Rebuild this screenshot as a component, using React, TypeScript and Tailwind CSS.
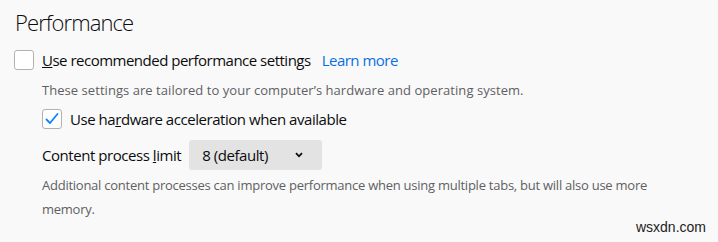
import React from "react";

function Check({ checked }: { checked?: boolean }) {
  return (
    <div className="w-5 h-5 shrink-0 rounded-[3px] border border-[#b1b1b3] bg-white flex items-center justify-center">
      {checked && (
        <svg width="16" height="16" viewBox="0 0 16 16">
          <path d="M2.5 8.5 L6 12 L13.5 3" fill="none" stroke="#0a84ff" strokeWidth="1.8" strokeLinecap="round" strokeLinejoin="round" />
        </svg>
      )}
    </div>
  );
}

export default function App() {
  return (
    <div className="relative w-[718px] h-[242px] bg-[#f9f9fa] text-[#0c0c0d] overflow-hidden" style={{ fontFamily: '"Open Sans", "Noto Sans", sans-serif' }}>
      <div className="pl-[15px] pt-[7px]">
        <h1 className="text-[22px] leading-[30px] font-light tracking-[-0.9px]">Performance</h1>
      </div>
      <div className="pl-[14px] mt-[13px] flex items-center gap-2 h-[20px]">
        <Check />
        <span className="text-[15px] tracking-[-0.5px]"><span className="underline">U</span>se recommended performance settings</span>
        <span className="ml-[3px] text-[15px] tracking-[-0.5px] text-[#0a70e0]">Learn more</span>
      </div>
      <div className="pl-[42px] mt-[10px] h-[20px] text-[13px] leading-[20px] text-[#5f5f62] tracking-[0.05px]">
        These settings are tailored to your computer’s hardware and operating system.
      </div>
      <div className="pl-[42px] mt-[9px] flex items-center gap-2 h-[20px]">
        <Check checked />
        <span className="text-[15px] tracking-[-0.45px]">Use ha<span className="underline">r</span>dware acceleration when available</span>
      </div>
      <div className="pl-[42px] mt-[11px] flex items-center gap-2 h-[30px]">
        <span className="text-[15px] tracking-[-0.45px]">Content process <span className="underline">l</span>imit</span>
        <div className="w-[133px] h-[30px] rounded-[3px] bg-[#e3e3e4] flex items-center pl-[13px] pr-[19px] justify-between">
          <span className="text-[15px] tracking-[-0.45px]">8 (default)</span>
          <svg width="8" height="6" viewBox="0 0 8 6">
            <path d="M1 1.2 L4 4.3 L7 1.2" fill="none" stroke="#0c0c0d" strokeWidth="1.8" />
          </svg>
        </div>
      </div>
      <div className="pl-[42px] pr-[30px] mt-[3px] text-[13px] leading-[24px] text-[#5f5f62] tracking-[-0.25px]">
        Additional content processes can improve performance when using multiple tabs, but will also use more memory.
      </div>
      <div className="absolute right-[12px] bottom-[4px] text-[14px] text-[#222]" style={{ fontFamily: '"Liberation Sans", sans-serif' }}>
        wsxdn.com
      </div>
    </div>
  );
}
